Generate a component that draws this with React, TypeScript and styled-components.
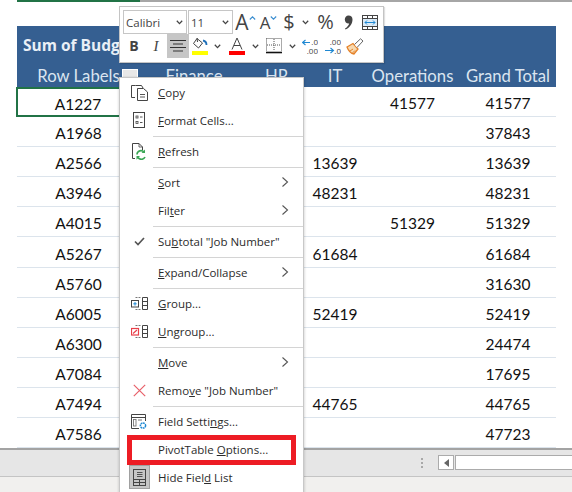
import React from 'react';
import styled, { createGlobalStyle } from 'styled-components';

const GlobalStyle = createGlobalStyle`
  html, body {
    margin: 0;
    padding: 0;
    background: #fff;
  }
`;

const Page = styled.div`
  position: relative;
  display: flex;
  flex-direction: column;
  width: 572px;
  height: 492px;
  overflow: hidden;
  background: #fff;
  font-family: Lato, 'Liberation Sans', sans-serif;
`;

const TopRule = styled.div`
  height: 2px;
  background: linear-gradient(to right, #fff 17px, #217346 17px, #217346 140px, #a6a6a6 140px);
  flex: none;
`;

const Sheet = styled.div`
  height: 446px;
  flex: none;
  padding: 24px 16px 0 17px;
  box-sizing: border-box;
  overflow: hidden;
`;

const TitleRow = styled.div`
  height: 31px;
  padding: 6px 0 0 6px;
  box-sizing: border-box;
  display: flex;
  align-items: center;
  background: #355f91;
  color: #e9eff6;
  font-family: 'Open Sans', sans-serif;
  font-weight: 700;
  font-size: 15.5px;
`;

const TitleText = styled.span`
  width: 96px;
  overflow: hidden;
  white-space: nowrap;
`;

const columns = '123px 108px 57px 60px 95px 96px';

const HeadRow = styled.div`
  height: 30px;
  display: grid;
  grid-template-columns: ${columns};
  background: #355f91;
  color: #dbe5f0;
  font-size: 16.7px;
`;

const HeadCell = styled.div`
  position: relative;
  display: flex;
  align-items: center;
  justify-content: center;
  white-space: nowrap;
  padding-top: 8px;
  box-sizing: border-box;
`;

const FilterButton = styled.span`
  position: absolute;
  left: 105px;
  top: 12px;
  width: 16px;
  height: 16px;
  background: #e8e8e8;
  border: 1px solid #fff;
  box-sizing: border-box;
`;

const DataRow = styled.div`
  height: 30.1px;
  box-sizing: border-box;
  display: grid;
  grid-template-columns: ${columns};
  border-bottom: 1px solid #dce4ec;
  color: #111;
  font-size: 15.5px;
`;

const Cell = styled.div<{ $selected?: boolean }>`
  display: flex;
  align-items: center;
  justify-content: center;
  box-sizing: border-box;
  padding-top: 3px;
  margin-left: ${(p) => (p.$selected ? '-1px' : '0')};
  margin-bottom: ${(p) => (p.$selected ? '-1px' : '0')};
  border: ${(p) => (p.$selected ? '2px solid #217346' : 'none')};
`;

const TabBar = styled.div`
  height: 29px;
  flex: none;
  display: flex;
  align-items: center;
  justify-content: flex-end;
  box-sizing: border-box;
  background: #e6e6e6;
  border-top: 2px solid #a3a3a3;
  border-bottom: 1px solid #c4c4c4;
  padding-bottom: 1px;
`;

const Grip = styled.div`
  display: flex;
  flex-direction: column;
  gap: 2px;
  margin-right: 15px;

  span {
    width: 2px;
    height: 2px;
    background: #a8a8a8;
  }
`;

const ScrollLeft = styled.div`
  width: 14px;
  height: 13px;
  background: #fff;
  border: 1px solid #ababab;
  display: flex;
  align-items: center;
  justify-content: center;
  margin-right: 1px;
`;

const ScrollTrack = styled.div`
  width: 116px;
  height: 13px;
  background: #fff;
  border: 1px solid #ababab;
  border-right: none;
`;

const StatusBar = styled.div`
  flex: 1;
  background: #f1f0ee;
`;

const MiniToolbar = styled.div`
  position: absolute;
  left: 119px;
  top: 6px;
  width: 265px;
  height: 57px;
  box-sizing: border-box;
  padding: 3px 0 0 3px;
  background: #fff;
  border: 1px solid #c4c4c4;
  box-shadow: 1px 1px 1px rgba(0, 0, 0, 0.12);
  display: flex;
  flex-direction: column;
  color: #444;
`;

const ToolRow = styled.div`
  display: flex;
  align-items: stretch;
  height: 24px;
  flex: none;
`;

const Combo = styled.div<{ $w: number }>`
  width: ${(p) => p.$w}px;
  box-sizing: border-box;
  margin-right: 1px;
  border: 1px solid #c6c6c6;
  display: flex;
  align-items: center;
  justify-content: space-between;
  padding: 0 3px 0 2px;
  font-family: 'Open Sans', sans-serif;
  font-size: 11.5px;
  color: #444;
`;

const Tool = styled.div<{ $w: number; $on?: boolean }>`
  width: ${(p) => p.$w}px;
  flex: none;
  display: flex;
  align-items: center;
  justify-content: center;
  background: ${(p) => (p.$on ? '#c6c6c6' : 'transparent')};
  font-family: 'Open Sans', sans-serif;
  color: #444;

  svg {
    flex: none;
  }
`;

const RaisedIcon = styled.span`
  display: flex;
  align-self: flex-start;
  margin-top: 6px;
`;

const Glyph = styled.span<{ $size: number; $bold?: boolean; $italic?: boolean; $serif?: boolean }>`
  font-size: ${(p) => p.$size}px;
  font-weight: ${(p) => (p.$bold ? 700 : 400)};
  font-style: ${(p) => (p.$italic ? 'italic' : 'normal')};
  font-family: ${(p) => (p.$serif ? "'Liberation Serif', serif" : 'inherit')};
  line-height: 1;
`;

const Menu = styled.div`
  position: absolute;
  left: 119px;
  top: 77px;
  width: 185px;
  height: 420px;
  box-sizing: border-box;
  padding-top: 1px;
  background: #fff;
  border: 1px solid #c8c8c8;
  box-shadow: -1px 0 2px rgba(0, 0, 0, 0.1), 1px 1px 2px rgba(0, 0, 0, 0.12);
  font-family: 'Open Sans', sans-serif;
  font-size: 11.5px;
  color: #2b2b2b;
`;

const Item = styled.div<{ $marked?: boolean }>`
  position: relative;
  height: 28px;
  box-sizing: border-box;
  padding-bottom: 2px;
  display: grid;
  grid-template-columns: 38px 1fr 22px;
  align-items: center;

  ${(p) =>
    p.$marked &&
    `
    &::after {
      content: '';
      position: absolute;
      left: 7px;
      right: 7px;
      top: -1px;
      bottom: -1px;
      border: 5px solid #ed1c24;
    }
  `}
`;

const ItemIcon = styled.div<{ $checked?: boolean }>`
  justify-self: center;
  display: flex;
  align-items: center;
  justify-content: center;
  width: 21px;
  height: 24px;
  box-sizing: border-box;
  background: ${(p) => (p.$checked ? '#c6c6c6' : 'transparent')};
  border: ${(p) => (p.$checked ? '1px solid #a0a0a0' : 'none')};
`;

const Sep = styled.div`
  height: 1px;
  margin: 1px 0 1px 33px;
  background: #d4d4d4;
`;

const Chevron = () => (
  <svg width="8" height="12" viewBox="0 0 8 12" fill="none" stroke="#555" strokeWidth="1.1">
    <polyline points="1.5,1.5 6.5,6 1.5,10.5" />
  </svg>
);

const Caret = () => (
  <svg width="7" height="5" viewBox="0 0 7 5" fill="none" stroke="#444" strokeWidth="1.3">
    <polyline points="0.8,0.8 3.5,3.6 6.2,0.8" />
  </svg>
);

const CopyIcon = () => (
  <svg width="19" height="17" viewBox="0 0 19 17" fill="none" stroke="#444">
    <path d="M5.5 1.5H1.5V13.5H5" />
    <path d="M5.5 1.5H11.5L13 4" />
    <path d="M7.5 4.5H13.5L17.5 8V16.5H7.5Z" />
    <path d="M10 10.5H15M10 13H15" strokeWidth="0.9" />
  </svg>
);

const FormatIcon = () => (
  <svg width="12" height="16" viewBox="0 0 12 16" fill="none" stroke="#444">
    <rect x="0.5" y="0.5" width="11" height="15" />
    <rect x="3" y="4" width="2" height="2" strokeWidth="0.8" />
    <rect x="3" y="9.5" width="2" height="2" strokeWidth="0.8" />
    <path d="M7 5H9.5M7 10.5H9.5" strokeWidth="0.9" />
  </svg>
);

const RefreshIcon = () => (
  <svg width="14" height="17" viewBox="0 0 14 17" fill="none">
    <path d="M3 15.5H0.5V0.5H7L10.5 4V7" stroke="#444" />
    <path d="M7 0.5V4H10.5" stroke="#444" strokeWidth="0.8" />
    <path d="M5 11.5A4 4 0 0 1 12 9M13 14A4 4 0 0 1 6 14.5" stroke="#3aa655" strokeWidth="1.6" />
    <path d="M13 6.5V10H9.5ZM4.5 16.8V13H8Z" fill="#3aa655" />
  </svg>
);

const CheckIcon = () => (
  <svg width="11" height="9" viewBox="0 0 11 9" fill="none" stroke="#555" strokeWidth="1.7">
    <polyline points="1,4.5 4,7.5 10,1" />
  </svg>
);

const GroupIcon = ({ ungroup }: { ungroup?: boolean }) => (
  <svg width="17" height="13" viewBox="0 0 17 13" fill="none">
    <path d="M11.5 0.5H16.5V12.5H11.5ZM11.5 4.5H16.5M11.5 8.5H16.5" stroke="#444" />
    <path d="M4.5 0.5H9.5M4.5 12.5H9.5" stroke="#777" strokeDasharray="2 1" />
    {ungroup ? (
      <>
        <rect x="0.5" y="3.5" width="7" height="6.5" fill="#fff" stroke="#e8404a" strokeWidth="1.2" />
        <path d="M2 8.5L6 5" stroke="#e8404a" strokeWidth="1.2" />
      </>
    ) : (
      <>
        <rect x="0.5" y="3.5" width="7" height="6.5" fill="#fff" stroke="#444" />
        <path d="M2.3 6.8H5.7M4 5V8.6" stroke="#1e88d2" />
      </>
    )}
  </svg>
);

const RemoveIcon = () => (
  <svg width="13" height="13" viewBox="0 0 13 13" fill="none" stroke="#e8606a" strokeWidth="1.2">
    <path d="M0.8 0.8L12.2 12.2M12.2 0.8L0.8 12.2" />
  </svg>
);

const FieldSettingsIcon = () => (
  <svg width="16" height="15" viewBox="0 0 16 15" fill="none">
    <path d="M8 14.5H0.5V0.5H14.5V7" stroke="#444" />
    <path d="M0.5 3.5H14.5" stroke="#444" />
    <rect x="2.5" y="5.5" width="2.5" height="6.5" stroke="#777" strokeWidth="0.9" />
    <path d="M7 6H11" stroke="#777" />
    <circle cx="12" cy="11.5" r="2.6" stroke="#1e88d2" strokeWidth="1.5" strokeDasharray="1.8 0.6" />
  </svg>
);

const FieldListIcon = () => (
  <svg width="13" height="17" viewBox="0 0 13 17" fill="none" stroke="#444">
    <rect x="0.5" y="0.5" width="12" height="16" />
    <path d="M0.5 10.5H12.5M0.5 13.5H12.5M6.5 10.5V16.5" />
    <path d="M4 3.5H9.5M4 5.5H9.5M4 7.5H9.5" strokeWidth="0.9" />
  </svg>
);

const SizeIcon = ({ up }: { up?: boolean }) => (
  <svg width="7" height="4" viewBox="0 0 7 4" fill="none" stroke="#3b8ed0" strokeWidth="1.1">
    <polyline points={up ? '0.8,3.5 3.5,0.8 6.2,3.5' : '0.8,0.5 3.5,3.2 6.2,0.5'} />
  </svg>
);

const CommaIcon = () => (
  <svg width="9" height="15" viewBox="0 0 9 15" fill="#444">
    <path d="M4.5 0.5C7 0.5 8.5 2 8.5 4.5C8.5 8.5 6 12.5 1.5 14.5L1 13.6C3.4 12 4.8 10.3 5.2 8.5C2.6 8.8 0.8 7 0.8 4.5C0.8 2.2 2.3 0.5 4.5 0.5Z" />
  </svg>
);

const WrapIcon = () => (
  <svg width="16" height="15" viewBox="0 0 16 15" fill="none">
    <rect x="0.5" y="0.5" width="15" height="14" stroke="#444" />
    <path d="M0.5 3.5H15.5M0.5 11.5H15.5M5.5 0.5V3.5M10.5 0.5V3.5M5.5 11.5V14.5M10.5 11.5V14.5" stroke="#444" />
    <rect x="1" y="4" width="14" height="7" fill="#dcebf7" />
    <path d="M3 7.5H13M5 5.5L3 7.5L5 9.5M11 5.5L13 7.5L11 9.5" stroke="#1e88d2" />
  </svg>
);

const AlignIcon = () => (
  <svg width="16" height="14" viewBox="0 0 16 14" stroke="#333" fill="none">
    <path d="M0 1.5H16M3 5H13M0 8.5H16M3 12H13" />
  </svg>
);

const FillIcon = () => (
  <svg width="16" height="18" viewBox="0 0 16 18" fill="none">
    <path d="M5 1.5L1.5 6.5L6.5 11L10.5 6Z" stroke="#444" fill="#fff" />
    <path d="M5 1L5.5 5" stroke="#444" />
    <path d="M11 3.5C13.5 4 14.5 6 14.5 8" stroke="#1e6fb8" strokeWidth="1.8" />
    <rect x="0" y="14" width="16" height="4" fill="#ffff00" />
  </svg>
);

const FontColorIcon = () => (
  <svg width="16" height="18" viewBox="0 0 16 18" fill="none">
    <path d="M3 12.5L8 1L13 12.5M5 8.5H11" stroke="#444" />
    <rect x="0" y="14" width="16" height="4" fill="#ff0000" />
  </svg>
);

const BordersIcon = () => (
  <svg width="16" height="16" viewBox="0 0 16 16" fill="none">
    <path d="M0.5 0.5H15.5V13M0.5 0.5V13M8 1V13M1 7H15" stroke="#555" strokeDasharray="1 1" />
    <path d="M0 14.5H16" stroke="#111" strokeWidth="1.6" />
  </svg>
);

const DecimalIcon = ({ increase }: { increase?: boolean }) => (
  <svg width="16" height="17" viewBox="0 0 16 17" fill="none">
    <path
      d={increase ? 'M0 12.5H8M5.5 10L8.5 12.5L5.5 15' : 'M1 4.5H8M3.5 2L0.5 4.5L3.5 7'}
      stroke="#1e88d2"
      strokeWidth="1.1"
    />
    <text x="16" y="7" fontSize="8" textAnchor="end" fontFamily="Open Sans" fill="#444">
      {increase ? '.00' : '.0'}
    </text>
    <text x="16" y="15.5" fontSize="8" textAnchor="end" fontFamily="Open Sans" fill="#444">
      {increase ? '.0' : '.00'}
    </text>
  </svg>
);

const BrushIcon = () => (
  <svg width="18" height="17" viewBox="0 0 18 17" fill="none">
    <path d="M1 9L7 5.5L12 11L8 16C5 15.5 2.5 13 1 9Z" fill="#f7d9b0" stroke="#e5822a" strokeWidth="1.3" />
    <path d="M4 13L7 11M6.5 15L9 12.5" stroke="#e5822a" />
    <path d="M8.5 6.5L14.5 0.8L17 3L11 9.5" fill="#fff" stroke="#666" />
  </svg>
);

const rows: [string, string, string, string][] = [
  ['A1227', '', '41577', '41577'],
  ['A1968', '', '', '37843'],
  ['A2566', '13639', '', '13639'],
  ['A3946', '48231', '', '48231'],
  ['A4015', '', '51329', '51329'],
  ['A5267', '61684', '', '61684'],
  ['A5760', '', '', '31630'],
  ['A6005', '52419', '', '52419'],
  ['A6300', '', '', '24474'],
  ['A7084', '', '', '17695'],
  ['A7494', '44765', '', '44765'],
  ['A7586', '', '', '47723'],
];

function App() {
  return (
    <Page>
      <GlobalStyle />
      <TopRule />
      <Sheet>
        <TitleRow>
          <TitleText>Sum of Budget</TitleText>
        </TitleRow>
        <HeadRow>
          <HeadCell>
            Row Labels
            <FilterButton />
          </HeadCell>
          <HeadCell>Finance</HeadCell>
          <HeadCell>HR</HeadCell>
          <HeadCell>IT</HeadCell>
          <HeadCell>Operations</HeadCell>
          <HeadCell>Grand Total</HeadCell>
        </HeadRow>
        {rows.map(([label, it, ops, total], i) => (
          <DataRow key={label}>
            <Cell $selected={i === 0}>{label}</Cell>
            <Cell />
            <Cell />
            <Cell>{it}</Cell>
            <Cell>{ops}</Cell>
            <Cell>{total}</Cell>
          </DataRow>
        ))}
      </Sheet>
      <TabBar>
        <Grip>
          <span />
          <span />
          <span />
        </Grip>
        <ScrollLeft>
          <svg width="5" height="8" viewBox="0 0 5 8" fill="#666">
            <path d="M5 0V8L0 4Z" />
          </svg>
        </ScrollLeft>
        <ScrollTrack />
      </TabBar>
      <StatusBar />

      <MiniToolbar>
        <ToolRow>
          <Combo $w={64}>
            Calibri <Caret />
          </Combo>
          <Combo $w={45}>
            11 <Caret />
          </Combo>
          <Tool $w={23}>
            <Glyph $size={21}>A</Glyph>
            <RaisedIcon>
              <SizeIcon up />
            </RaisedIcon>
          </Tool>
          <Tool $w={23}>
            <Glyph $size={17}>A</Glyph>
            <RaisedIcon>
              <SizeIcon />
            </RaisedIcon>
          </Tool>
          <Tool $w={18}>
            <Glyph $size={20}>$</Glyph>
          </Tool>
          <Tool $w={14}>
            <Caret />
          </Tool>
          <Tool $w={27}>
            <Glyph $size={20}>%</Glyph>
          </Tool>
          <Tool $w={19}>
            <CommaIcon />
          </Tool>
          <Tool $w={24}>
            <WrapIcon />
          </Tool>
        </ToolRow>
        <ToolRow>
          <Tool $w={22}>
            <Glyph $size={14} $bold>
              B
            </Glyph>
          </Tool>
          <Tool $w={22}>
            <Glyph $size={15} $italic $serif>
              I
            </Glyph>
          </Tool>
          <Tool $w={22} $on>
            <AlignIcon />
          </Tool>
          <Tool $w={22}>
            <FillIcon />
          </Tool>
          <Tool $w={12}>
            <Caret />
          </Tool>
          <Tool $w={28}>
            <FontColorIcon />
          </Tool>
          <Tool $w={8}>
            <Caret />
          </Tool>
          <Tool $w={30}>
            <BordersIcon />
          </Tool>
          <Tool $w={6}>
            <Caret />
          </Tool>
          <Tool $w={30}>
            <DecimalIcon />
          </Tool>
          <Tool $w={16}>
            <DecimalIcon increase />
          </Tool>
          <Tool $w={27}>
            <BrushIcon />
          </Tool>
        </ToolRow>
      </MiniToolbar>

      <Menu>
        <Item>
          <ItemIcon>
            <CopyIcon />
          </ItemIcon>
          <span>
            <u>C</u>opy
          </span>
        </Item>
        <Item>
          <ItemIcon>
            <FormatIcon />
          </ItemIcon>
          <span>
            <u>F</u>ormat Cells...
          </span>
        </Item>
        <Sep />
        <Item>
          <ItemIcon>
            <RefreshIcon />
          </ItemIcon>
          <span>
            <u>R</u>efresh
          </span>
        </Item>
        <Sep />
        <Item>
          <span />
          <span>
            <u>S</u>ort
          </span>
          <Chevron />
        </Item>
        <Item>
          <span />
          <span>
            Fil<u>t</u>er
          </span>
          <Chevron />
        </Item>
        <Sep />
        <Item>
          <ItemIcon>
            <CheckIcon />
          </ItemIcon>
          <span>
            Su<u>b</u>total &quot;Job Number&quot;
          </span>
        </Item>
        <Sep />
        <Item>
          <span />
          <span>
            <u>E</u>xpand/Collapse
          </span>
          <Chevron />
        </Item>
        <Sep />
        <Item>
          <ItemIcon>
            <GroupIcon />
          </ItemIcon>
          <span>
            <u>G</u>roup...
          </span>
        </Item>
        <Item>
          <ItemIcon>
            <GroupIcon ungroup />
          </ItemIcon>
          <span>
            <u>U</u>ngroup...
          </span>
        </Item>
        <Sep />
        <Item>
          <span />
          <span>
            <u>M</u>ove
          </span>
          <Chevron />
        </Item>
        <Item>
          <ItemIcon>
            <RemoveIcon />
          </ItemIcon>
          <span>
            Remo<u>v</u>e &quot;Job Number&quot;
          </span>
        </Item>
        <Sep />
        <Item>
          <ItemIcon>
            <FieldSettingsIcon />
          </ItemIcon>
          <span>
            Field Setti<u>n</u>gs...
          </span>
        </Item>
        <Item $marked>
          <span />
          <span>
            PivotTable <u>O</u>ptions...
          </span>
        </Item>
        <Item>
          <ItemIcon $checked>
            <FieldListIcon />
          </ItemIcon>
          <span>
            Hide Fiel<u>d</u> List
          </span>
        </Item>
      </Menu>
    </Page>
  );
}

export default App;
